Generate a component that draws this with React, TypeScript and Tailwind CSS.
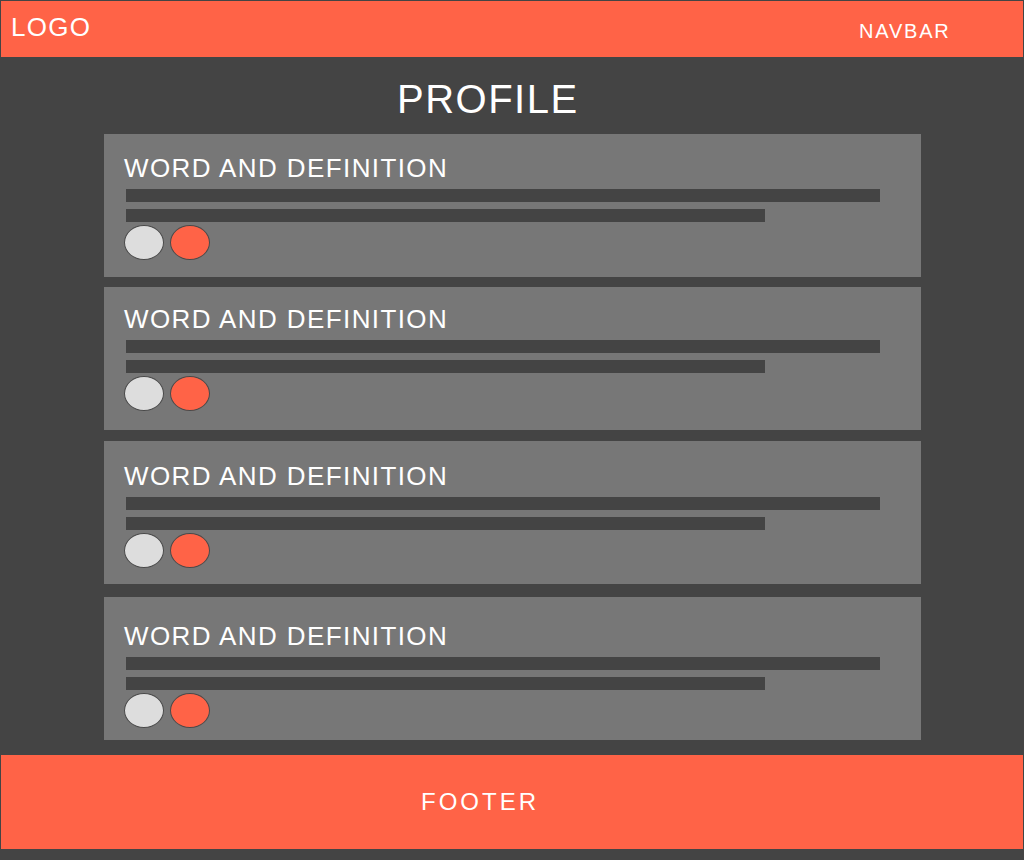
import React from "react";

const font = { fontFamily: '"Liberation Sans", Arial, sans-serif' };

function Card({ pt, mt }: { pt: string; mt: string }) {
  return (
    <div className={`${mt} ml-[104px] flex h-[143px] w-[817px] flex-col bg-[#777777] ${pt}`}>
      <div className="pl-[20px] text-[26px] leading-none tracking-[1.4px] text-white">
        WORD AND DEFINITION
      </div>
      <div className="ml-[22px] mt-[8px] h-[13px] w-[754px] bg-[#444444]" />
      <div className="ml-[22px] mt-[7px] h-[13px] w-[639px] bg-[#444444]" />
      <div className="ml-[20px] mt-[3px] flex gap-[6px]">
        <div className="h-[35px] w-[40px] rounded-[50%] border border-[#4a4a4a] bg-[#dddddd]" />
        <div className="h-[35px] w-[40px] rounded-[50%] border border-[#4a4a4a] bg-[#ff6347]" />
      </div>
    </div>
  );
}

export default function App() {
  return (
    <div className="flex h-[860px] w-[1024px] flex-col bg-[#444444]" style={font}>
      <div className="mx-px mt-px flex h-[56px] items-start bg-[#ff6347]">
        <div className="ml-[10px] mt-[13px] w-[848px] text-[26px] leading-none tracking-[1.3px] text-white">LOGO</div>
        <div className="mt-[20px] text-[20px] leading-none tracking-[1.8px] text-white">NAVBAR</div>
      </div>
      <div className="flex h-[698px] flex-col">
        <div className="ml-[397px] mt-[22px] text-[40px] leading-none tracking-[1.5px] text-white">PROFILE</div>
        <Card mt="mt-[15px]" pt="pt-[21px]" />
        <Card mt="mt-[10px]" pt="pt-[19px]" />
        <Card mt="mt-[11px]" pt="pt-[22px]" />
        <Card mt="mt-[13px]" pt="pt-[26px]" />
      </div>
      <div className="mx-px flex h-[94px] items-start bg-[#ff6347]">
        <div className="ml-[420px] mt-[35px] text-[24px] leading-none tracking-[3px] text-white">FOOTER</div>
      </div>
    </div>
  );
}
